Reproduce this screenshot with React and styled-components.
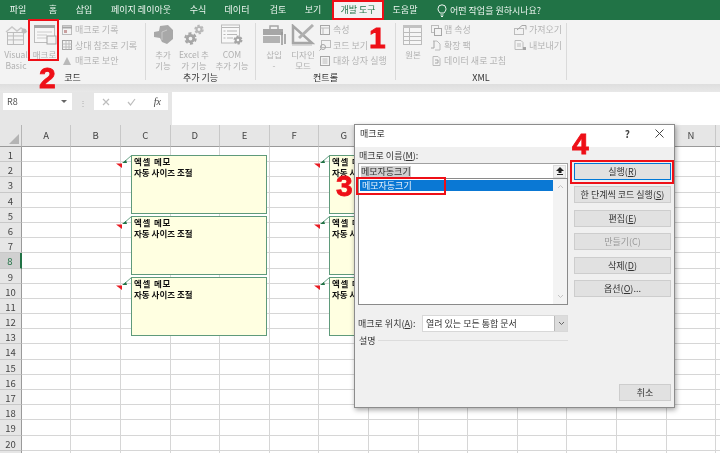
import React from 'react'
import styled, { createGlobalStyle } from 'styled-components'

const GlobalStyle = createGlobalStyle`
  html, body { margin: 0; padding: 0; background: white; }
  body { font-family: "Noto Sans CJK KR", "Noto Sans", sans-serif; }
  * { box-sizing: border-box; }
`;
const Page = styled.div`
  position: relative;
  width: 720px;
  height: 453px;
  overflow: hidden;
  background: white;
  filter: blur(0.35px);
`;
const TabBar = styled.div`
  display: flex;
  height: 20px;
  background: #217346;
`;
const Tab = styled.div`
  flex: 0 0 ${p => p.$w}px;
  text-align: center;
  font-size: 9px;
  line-height: 19px;
  color: ${p => p.$active ? '#217346' : '#eef6f1'};
  background: ${p => p.$active ? '#f3f3f3' : 'transparent'};
`;
const TellMe = styled.div`
  display: flex;
  align-items: center;
  gap: 3px;
  margin-left: 11px;
  font-size: 9px;
  color: #eef6f1;
`;
const Ribbon = styled.div`
  display: flex;
  height: 64px;
  background: #f3f3f3;
`;
const Group = styled.div`
  flex: 0 0 ${p => p.$w}px;
  display: flex;
  flex-direction: column;
  margin-top: 3px;
  margin-bottom: 4px;
  border-right: 1px solid #dadada;
`;
const GroupBody = styled.div`
  flex: 1;
  min-height: 0;
  display: flex;
  padding-left: ${p => p.$pad}px;
`;
const GroupLabel = styled.div`
  flex: 0 0 8px;
  height: 8px;
  text-align: center;
  font-size: 9px;
  line-height: 12px;
  color: #333;
`;
const LargeButton = styled.div`
  flex: 0 0 ${p => p.$w}px;
  display: flex;
  flex-direction: column;
  align-items: center;
  margin-right: ${p => p.$gap || 0}px;
  padding-top: 1px;
  font-size: 8.5px;
  line-height: 11px;
  color: #b0b0b0;
  text-align: center;
  svg { flex: 0 0 22px; margin-bottom: 3px; }
`;
const SmallColumn = styled.div`
  display: flex;
  flex-direction: column;
  gap: 2.5px;
  margin-left: ${p => p.$left || 0}px;
`;
const SmallItem = styled.div`
  display: flex;
  align-items: center;
  gap: 2px;
  height: 13px;
  font-size: 9px;
  color: #b4b4b4;
  white-space: nowrap;
`;
const RibbonShade = styled.div`
  height: 8px;
  background: linear-gradient(#dedede, #e8e8e8);
`;
const FormulaBar = styled.div`
  display: flex;
  height: 33px;
  background: #e6e6e6;
`;
const NameBox = styled.div`
  display: flex;
  justify-content: space-between;
  align-items: center;
  width: 69px;
  height: 17px;
  margin: 1px 0 0 3px;
  padding: 0 5px 0 4px;
  background: white;
  font-size: 9px;
  color: #555;
`;
const Caret = styled.span`
  width: 0;
  height: 0;
  border-left: 3px solid transparent;
  border-right: 3px solid transparent;
  border-top: 3px solid #666;
`;
const Grip = styled.div`
  width: 22px;
  margin-top: 6px;
  height: 9px;
  text-align: center;
  color: #aaa;
  font-size: 8px;
  line-height: 9px;
`;
const FunctionBox = styled.div`
  display: flex;
  align-items: center;
  justify-content: space-between;
  width: 74px;
  height: 17px;
  margin-top: 1px;
  padding: 0 7px 0 8px;
  background: white;
  color: #b8b8b8;
`;
const FxLabel = styled.i`
  font-family: "Liberation Serif", serif;
  font-size: 10px;
  color: #444;
`;
const FormulaInput = styled.div`
  flex: 1;
  margin-left: 4px;
  background: white;
`;
const Sheet = styled.div`
  display: grid;
  grid-template-columns: 21.8px repeat(15, 49.6px);
  grid-template-rows: 22px repeat(21, 15.2px);
  background: white;
`;
const Corner = styled.div`
  display: flex;
  align-items: flex-end;
  justify-content: flex-end;
  padding: 0 2px 2px 0;
  background: #e6e6e6;
  border-right: 1px solid #b5b5b5;
  border-bottom: 1px solid #9a9a9a;
`;
const ColHeader = styled.div`
  background: #e6e6e6;
  border-right: 1px solid #c8c8c8;
  border-bottom: 1px solid #9a9a9a;
  text-align: center;
  font-size: 9.5px;
  line-height: 21px;
  color: #444;
`;
const RowHeader = styled.div`
  position: relative;
  padding-top: 1px;
  background: ${p => p.$active ? '#d0d0d0' : '#e6e6e6'};
  border-right: ${p => p.$active ? '2px solid #217346' : '1px solid #9a9a9a'};
  border-bottom: 1px solid #c8c8c8;
  text-align: center;
  font-size: 9.5px;
  line-height: 15px;
  color: ${p => p.$active ? '#217346' : '#444'};
`;
const Cell = styled.div`
  border-right: 1px solid #d6d6d6;
  border-bottom: 1px solid #d6d6d6;
`;
const Note = styled.div`
  position: absolute;
  left: ${p => p.$x}px;
  top: ${p => p.$y}px;
  width: 136px;
  height: 59px;
  padding: 0 2px;
  background: #ffffe1;
  border: 1px solid #5f9a7b;
  font-size: 8.5px;
  line-height: 11px;
  font-weight: 700;
  color: #111;
`;
const NoteTitle = styled.div`
  letter-spacing: 0.8px;
`;
const NoteArrow = styled.svg`
  position: absolute;
  left: -16px;
  top: -1px;
`;
const Dialog = styled.div`
  position: absolute;
  left: 354px;
  top: 124px;
  width: 321px;
  height: 284px;
  display: flex;
  flex-direction: column;
  background: #f0f0f0;
  border: 1px solid #8c8c8c;
  box-shadow: 1px 2px 5px rgba(0, 0, 0, 0.35);
  font-size: 9px;
  color: #333;
`;
const TitleBar = styled.div`
  flex: 0 0 22px;
  display: flex;
  align-items: center;
  padding: 0 10px 6px 5px;
  background: white;
`;
const TitleText = styled.div`
  flex: 1;
`;
const TitleHelp = styled.div`
  margin-right: 25px;
  font-size: 10px;
  font-weight: 700;
  color: #444;
`;
const DialogBody = styled.div`
  flex: 1;
  display: flex;
  padding: 4px 4px 6px 3px;
`;
const LeftColumn = styled.div`
  flex: 0 0 210px;
  display: flex;
  flex-direction: column;
`;
const RightColumn = styled.div`
  flex: 0 0 97px;
  display: flex;
  flex-direction: column;
  gap: 6.4px;
  margin-left: 6px;
  padding-top: 12px;
`;
const FieldLabel = styled.div`
  height: 12px;
  padding-left: 1px;
  line-height: 9px;
  u { text-decoration: underline; }
`;
const MacroInput = styled.div`
  display: flex;
  justify-content: space-between;
  align-items: center;
  height: 15px;
  padding: 0 1px 0 2px;
  background: white;
  border: 1px solid #a0a0a0;
  border-bottom: none;
`;
const Selected = styled.span`
  background: #cfcfcf;
  line-height: 11px;
  color: #333;
`;
const UpButton = styled.div`
  display: flex;
  align-items: center;
  justify-content: center;
  width: 13px;
  height: 13px;
  background: #f0f0f0;
  border: 1px solid #dcdcdc;
`;
const MacroList = styled.div`
  display: flex;
  justify-content: space-between;
  height: 127px;
  background: white;
  border: 1px solid #8a8a8a;
`;
const ListItems = styled.div`
  flex: 1;
  padding: 1px 0 0 1px;
`;
const ListItem = styled.div`
  height: 11px;
  padding-left: 2px;
  background: #0a78d4;
  color: #e8f2fb;
  line-height: 11px;
`;
const ListScroll = styled.div`
  flex: 0 0 14px;
  display: flex;
  flex-direction: column;
  justify-content: space-between;
  align-items: center;
  padding: 5px 0;
  background: #f3f3f3;
`;
const LocationRow = styled.div`
  display: flex;
  align-items: center;
  justify-content: space-between;
  height: 17px;
  margin-top: 10px;
`;
const LocationSelect = styled.div`
  display: flex;
  justify-content: space-between;
  align-items: stretch;
  width: 146px;
  height: 17px;
  padding-left: 3px;
  background: white;
  border: 1px solid #d8d8d8;
  line-height: 15px;
`;
const SelectButton = styled.div`
  display: flex;
  align-items: center;
  justify-content: center;
  width: 13px;
  background: #dcdcdc;
  border-left: 1px solid #b8b8b8;
`;
const DescRow = styled.div`
  display: flex;
  align-items: center;
  gap: 2px;
  height: 11px;
  margin-top: 3px;
  padding-left: 1px;
`;
const DescRule = styled.div`
  flex: 1;
  height: 1px;
  background: #dcdcdc;
`;
const DialogButton = styled.div`
  flex: 0 0 17px;
  width: ${p => p.$w || 97}px;
  margin-left: ${p => p.$push ? 'auto' : 0};
  margin-top: ${p => p.$bottom ? 'auto' : 0};
  background: #e1e1e1;
  border: 1px solid ${p => p.$primary ? '#0078d7' : '#cdcdcd'};
  box-shadow: ${p => p.$primary ? 'inset 0 0 0 1px #e1e1e1' : 'none'};
  text-align: center;
  line-height: 15px;
  white-space: nowrap;
  color: ${p => p.$disabled ? '#9a9a9a' : '#333'};
  u { text-decoration: underline; }
`;
const RedBox = styled.div`
  position: absolute;
  left: ${p => p.$x}px;
  top: ${p => p.$y}px;
  width: ${p => p.$w}px;
  height: ${p => p.$h}px;
  border: 2px solid #ee0f17;
`;
const StepNumber = styled.div`
  position: absolute;
  left: ${p => p.$x}px;
  top: ${p => p.$y}px;
  font-family: "Liberation Sans", Arial, sans-serif;
  font-size: 30px;
  line-height: 30px;
  font-weight: 700;
  color: #ee0f17;
  -webkit-text-stroke: 0.8px #ee0f17;
`;

const G = '#bcbcbc'
const D = '#a6a6a6'

function Gear({ cx, cy, r, color = D }) {
  return (
    <g fill="none" stroke={color}>
      <circle cx={cx} cy={cy} r={r * 0.65} strokeWidth={r * 0.55} />
      <circle cx={cx} cy={cy} r={r * 1.05} strokeWidth={r * 0.4} strokeDasharray={`${r * 0.62} ${r * 0.48}`} />
    </g>
  )
}
function Sheetlet({ x, y, w, h }) {
  return (
    <g fill="none" stroke={G}>
      <rect x={x + .5} y={y + .5} width={w} height={h} />
      <path d={`M${x} ${y + h * .33}h${w}M${x} ${y + h * .66}h${w}M${x + w * .4} ${y}v${h}`} />
    </g>
  )
}
const VbIcon = () => (
  <svg width="24" height="22" viewBox="0 0 24 22">
    <path d="M2 8 8 3l5 4 4-3 6 4" fill="none" stroke="#c8c8c8" strokeWidth="1.5" />
    <Sheetlet x={3} y={8} w={16} h={12} />
    <circle cx="20" cy="7" r="2.5" fill={G} />
  </svg>
)
const MacroIcon = () => (
  <svg width="24" height="22" viewBox="0 0 24 22">
    <rect x="1.5" y="1.5" width="20" height="17" fill="#f7f7f7" stroke={G} />
    <rect x="1" y="1" width="21" height="3" fill={D} />
    <path d="M4 8h15M4 11h10M4 14h10" stroke="#cccccc" />
    <rect x="14" y="12" width="9" height="8" fill="#f3f3f3" stroke={D} />
  </svg>
)
const AddinIcon = () => (
  <svg width="22" height="22" viewBox="0 0 22 22">
    <path d="M8 2l8-1 5 5v9l-6 5-5-2-2-4-6-1V8l5-1z" fill="#a8a8a8" />
    <path d="M10 8l5-2M10 8v8" stroke="#c8c8c8" fill="none" />
  </svg>
)
const GearsIcon = () => (
  <svg width="22" height="22" viewBox="0 0 22 22">
    <Gear cx={7.5} cy={14.5} r={5} />
    <Gear cx={16} cy={5.5} r={3.8} color="#b8b8b8" />
  </svg>
)
const ComIcon = () => (
  <svg width="24" height="22" viewBox="0 0 24 22">
    <rect x="1.5" y="1" width="18" height="18" fill="#f8f8f8" stroke={G} />
    <path d="M2 3.5h17M7 7h10M7 10.500h10M7 14h6M3.500 7h2M3.500 10.500h2M3.500 14h2" stroke="#b8b8b8" />
    <Gear cx={18} cy={16} r={3.6} />
  </svg>
)
const InsertIcon = () => (
  <svg width="24" height="22" viewBox="0 0 24 22">
    <path d="M8 5V2h8v3" fill="none" stroke={D} strokeWidth="1.500" />
    <rect x="1" y="5" width="20" height="6" fill={D} />
    <rect x="1" y="12" width="17" height="7" fill="#b2b2b2" />
    <path d="M20 8v13M23 10v10" stroke="#969696" strokeWidth="1.500" />
  </svg>
)
const DesignIcon = () => (
  <svg width="24" height="22" viewBox="0 0 24 22">
    <path d="M2 2v17h19z" fill="none" stroke={D} strokeWidth="2.500" />
    <path d="M8 14 22 1" stroke="#b0b0b0" strokeWidth="3" />
    <path d="M1 21h20" stroke={G} />
  </svg>
)
const SourceIcon = () => (
  <svg width="22" height="22" viewBox="0 0 22 22">
    <rect x="1.500" y="1.500" width="18" height="19" fill="#f6f6f6" stroke={G} />
    <rect x="1" y="1" width="19" height="3" fill="#c2c2c2" />
    <path d="M2 8.500h17M2 12.500h17M2 16.500h17M7.500 4v16" stroke={G} />
  </svg>
)
const TinyRecord = () => (
  <svg width="12" height="12" viewBox="0 0 12 12"><rect x="1.500" y="1.500" width="9" height="9" fill="none" stroke={G} /><path d="M1 3.500h10" stroke={D} strokeWidth="2" /><rect x="3" y="6" width="3" height="3" fill="#c9a0a0" /></svg>
)
const TinyGrid = () => (
  <svg width="12" height="12" viewBox="0 0 12 12"><rect x="1.500" y="1.500" width="9" height="9" fill="none" stroke={D} /><path d="M1.500 5h9M1.500 8h9M5 1.500v9M8 1.500v9" stroke={G} /></svg>
)
const TinyWarn = () => (
  <svg width="12" height="12" viewBox="0 0 12 12"><path d="M6 2l4 8H2z" fill="#b9b9b9" /></svg>
)
const TinyProps = () => (
  <svg width="12" height="12" viewBox="0 0 12 12"><rect x="1.500" y="1.500" width="9" height="9" fill="none" stroke={D} /><path d="M1.500 4h9M4 4v6.500" stroke={G} /></svg>
)
const TinyCode = () => (
  <svg width="12" height="12" viewBox="0 0 12 12"><rect x="2.500" y="1.500" width="9" height="7" fill="none" stroke={G} /><circle cx="4" cy="8" r="2.500" fill="none" stroke={D} /><path d="M2 10 .5 11.500" stroke={D} /></svg>
)
const TinyDoc = () => (
  <svg width="12" height="12" viewBox="0 0 12 12"><rect x="1.500" y="1.500" width="9" height="9" fill="none" stroke={D} /><path d="M3.500 4h5M3.500 6h5M3.500 8h5" stroke={G} /></svg>
)
const TinyMap = () => (
  <svg width="12" height="12" viewBox="0 0 12 12"><rect x="1.500" y="1.500" width="7" height="7" fill="none" stroke={G} /><rect x="4.500" y="4.500" width="7" height="7" fill="#f3f3f3" stroke={D} /></svg>
)
const TinyPack = () => (
  <svg width="12" height="12" viewBox="0 0 12 12"><path d="M3 2h4l3 3v6H5" fill="none" stroke={G} /><path d="M4 2v7H1" fill="none" stroke={D} /></svg>
)
const TinyRefresh = () => (
  <svg width="12" height="12" viewBox="0 0 12 12"><path d="M3 1.500h5l2 2v7H3z" fill="none" stroke={G} /><path d="M5 5h3v3H5" fill="none" stroke={D} /></svg>
)
const TinyImport = () => (
  <svg width="14" height="12" viewBox="0 0 14 12"><rect x="1.500" y="4.500" width="9" height="6" fill="none" stroke={G} /><path d="M4 6 9 1.500h4M13 1.500v4" fill="none" stroke={D} /></svg>
)
const TinyExport = () => (
  <svg width="14" height="12" viewBox="0 0 14 12"><path d="M2 1.500h6l2 2v7H2z" fill="none" stroke={G} /><path d="M4 5h4M4 7h4" stroke={G} /><rect x="10" y="8" width="3" height="3" fill={D} /></svg>
)
const Bulb = () => (
  <svg width="10" height="13" viewBox="0 0 10 13" fill="none" stroke="#eef6f1">
    <path d="M3 9C2 7.500 1 6.500 1 4.800a4 4 0 0 1 8 0C9 6.500 8 7.500 7 9z" />
    <path d="M3.500 11h3M4 12.500h2" />
  </svg>
)
const Chevron = ({ up, color = '#a0a0a0' }) => (
  <svg width="7" height="5" viewBox="0 0 7 5"><path d={up ? 'M1 4l2.500-2.500L6 4' : 'M1 1l2.500 2.500L6 1'} fill="none" stroke={color} /></svg>
)

function Comment({ x, y }) {
  return (
    <Note $x={x} $y={y}>
      <NoteArrow width="16" height="14" viewBox="0 0 16 14">
        <path d="M15.500 .5 8 7" stroke="#6aa387" fill="none" />
        <path d="M6 8l4-3 1 3z" fill="#217346" />
        <path d="M0 8.500h6V13z" fill="#e81b22" />
      </NoteArrow>
      <NoteTitle>엑셀 메모</NoteTitle>
      자동 사이즈 조절
    </Note>
  )
}

const columns = 'ABCDEFGHIJKLMNO'.split('')
const rows = Array.from({ length: 21 }, (_, i) => i + 1)

export default function App() {
  return (
    <Page>
      <GlobalStyle />
      <TabBar>
        <Tab $w={36}>파일</Tab>
        <Tab $w={34}>홈</Tab>
        <Tab $w={28}>삽입</Tab>
        <Tab $w={86}>페이지 레이아웃</Tab>
        <Tab $w={28}>수식</Tab>
        <Tab $w={50}>데이터</Tab>
        <Tab $w={32}>검토</Tab>
        <Tab $w={38}>보기</Tab>
        <Tab $w={52} $active>개발 도구</Tab>
        <Tab $w={42}>도움말</Tab>
        <TellMe><Bulb /> 어떤 작업을 원하시나요?</TellMe>
      </TabBar>
      <Ribbon>
        <Group $w={146}>
          <GroupBody $pad={4}>
            <LargeButton $w={24} $gap={3}><VbIcon />Visual<br />Basic</LargeButton>
            <LargeButton $w={27}><MacroIcon />매크로</LargeButton>
            <SmallColumn $left={3}>
              <SmallItem><TinyRecord />매크로 기록</SmallItem>
              <SmallItem><TinyGrid />상대 참조로 기록</SmallItem>
              <SmallItem><TinyWarn />매크로 보안</SmallItem>
            </SmallColumn>
          </GroupBody>
          <GroupLabel>코드</GroupLabel>
        </Group>
        <Group $w={110}>
          <GroupBody $pad={6}>
            <LargeButton $w={22} $gap={3}><AddinIcon />추가<br />기능</LargeButton>
            <LargeButton $w={34} $gap={2}><GearsIcon />Excel 추<br />가 기능</LargeButton>
            <LargeButton $w={38}><ComIcon />COM<br />추가 기능</LargeButton>
          </GroupBody>
          <GroupLabel>추가 기능</GroupLabel>
        </Group>
        <Group $w={140}>
          <GroupBody $pad={6}>
            <LargeButton $w={24} $gap={4}><InsertIcon />삽입<br />-</LargeButton>
            <LargeButton $w={26} $gap={3}><DesignIcon />디자인<br />모드</LargeButton>
            <SmallColumn>
              <SmallItem><TinyProps />속성</SmallItem>
              <SmallItem><TinyCode />코드 보기</SmallItem>
              <SmallItem><TinyDoc />대화 상자 실행</SmallItem>
            </SmallColumn>
          </GroupBody>
          <GroupLabel>컨트롤</GroupLabel>
        </Group>
        <Group $w={171}>
          <GroupBody $pad={5}>
            <LargeButton $w={24} $gap={5}><SourceIcon />원본</LargeButton>
            <SmallColumn>
              <SmallItem><TinyMap />맵 속성</SmallItem>
              <SmallItem><TinyPack />확장 팩</SmallItem>
              <SmallItem><TinyRefresh />데이터 새로 고침</SmallItem>
            </SmallColumn>
            <SmallColumn $left={7}>
              <SmallItem><TinyImport />가져오기</SmallItem>
              <SmallItem><TinyExport />내보내기</SmallItem>
            </SmallColumn>
          </GroupBody>
          <GroupLabel>XML</GroupLabel>
        </Group>
      </Ribbon>
      <RibbonShade />
      <FormulaBar>
        <NameBox>R8<Caret /></NameBox>
        <Grip>⋮</Grip>
        <FunctionBox>
          <svg width="8" height="8" viewBox="0 0 8 8"><path d="M1 1l6 6M7 1 1 7" stroke="#bdbdbd" strokeWidth="1.200" /></svg>
          <svg width="9" height="8" viewBox="0 0 9 8"><path d="M1 4l2.500 3L8 1" fill="none" stroke="#bdbdbd" strokeWidth="1.200" /></svg>
          <FxLabel>fx</FxLabel>
        </FunctionBox>
        <FormulaInput />
      </FormulaBar>
      <Sheet>
        <Corner>
          <svg width="10" height="10" viewBox="0 0 10 10"><path d="M10 0v10H0z" fill="#b4b4b4" /></svg>
        </Corner>
        {columns.map(c => <ColHeader key={c}>{c === 'O' ? '' : c}</ColHeader>)}
        {rows.map(r => (
          <React.Fragment key={r}>
            <RowHeader $active={r === 8}>{r < 21 ? r : ''}</RowHeader>
            {columns.map(c => <Cell key={c} />)}
          </React.Fragment>
        ))}
      </Sheet>

      <Comment x={131} y={155} />
      <Comment x={131} y={216} />
      <Comment x={131} y={277} />
      <Comment x={329} y={155} />
      <Comment x={329} y={216} />
      <Comment x={329} y={277} />

      <Dialog>
        <TitleBar>
          <TitleText>매크로</TitleText>
          <TitleHelp>?</TitleHelp>
          <svg width="9" height="9" viewBox="0 0 9 9"><path d="M.5.5l8 8M8.500.5l-8 8" stroke="#444" /></svg>
        </TitleBar>
        <DialogBody>
          <LeftColumn>
            <FieldLabel>매크로 이름(<u>M</u>):</FieldLabel>
            <MacroInput>
              <Selected>메모자동크기</Selected>
              <UpButton>
                <svg width="8" height="8" viewBox="0 0 8 8"><path d="M4 0 8 4H5.500v2h-3V4H0z" fill="#222" /><path d="M1 7.500h6" stroke="#222" /></svg>
              </UpButton>
            </MacroInput>
            <MacroList>
              <ListItems><ListItem>메모자동크기</ListItem></ListItems>
              <ListScroll><Chevron up color="#c4c4c4" /><Chevron color="#c4c4c4" /></ListScroll>
            </MacroList>
            <LocationRow>
              <span>매크로 위치(<u>A</u>):</span>
              <LocationSelect>
                열려 있는 모든 통합 문서
                <SelectButton><Chevron color="#666" /></SelectButton>
              </LocationSelect>
            </LocationRow>
            <DescRow>설명<DescRule /></DescRow>
          </LeftColumn>
          <RightColumn>
            <DialogButton $primary>실행(<u>R</u>)</DialogButton>
            <DialogButton>한 단계씩 코드 실행(<u>S</u>)</DialogButton>
            <DialogButton>편집(<u>E</u>)</DialogButton>
            <DialogButton $disabled>만들기(C)</DialogButton>
            <DialogButton>삭제(<u>D</u>)</DialogButton>
            <DialogButton>옵션(<u>O</u>)...</DialogButton>
            <DialogButton $w={52} $push $bottom>취소</DialogButton>
          </RightColumn>
        </DialogBody>
      </Dialog>

      <RedBox $x={332} $y={0} $w={52} $h={20} />
      <RedBox $x={28} $y={19} $w={31} $h={42} />
      <RedBox $x={356} $y={177} $w={90} $h={18} />
      <RedBox $x={570} $y={160} $w={104} $h={24} />
      <StepNumber $x={369} $y={23}>1</StepNumber>
      <StepNumber $x={39} $y={63}>2</StepNumber>
      <StepNumber $x={336} $y={171}>3</StepNumber>
      <StepNumber $x={572} $y={129}>4</StepNumber>
    </Page>
  )
}
